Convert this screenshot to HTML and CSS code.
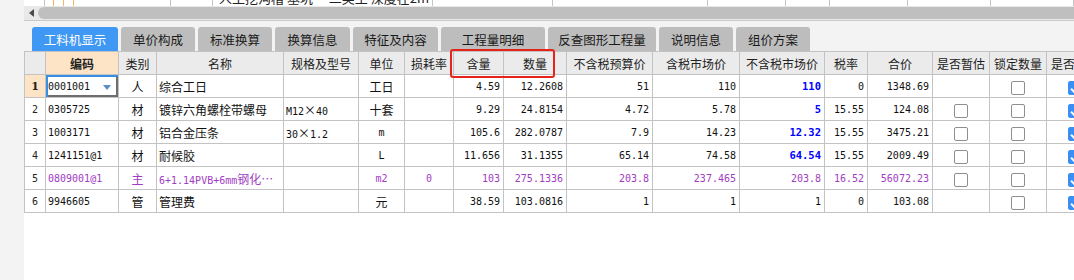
FILE: index.html
```html
<!DOCTYPE html>
<html lang="zh">
<head>
<meta charset="utf-8">
<title>工料机显示</title>
<link rel="stylesheet" href="styles.css">
</head>
<body>
<div class="app">
  <div class="side"></div>
  <div class="main">
    <div class="prev-row">
      <div class="pc w21"></div>
      <div class="pc w9 or"></div>
      <div class="pc w10 or"></div>
      <div class="pc w10 or"></div>
      <div class="pc w97"></div>
      <div class="pc w42"></div>
      <div class="pc w220 txt">人工挖沟槽 基坑　 二类土 深度在2m</div>
      <div class="pc w120"></div>
      <div class="pc w155"></div>
      <div class="pc w78"></div>
      <div class="pc w44"></div>
      <div class="pc w78"></div>
      <div class="pc w83"></div>
      <div class="pc w83"></div>
    </div>
    <div class="hscroll"><span class="arrow"></span><span class="thumb"></span></div>
    <div class="tabs">
      <div class="tab active t86">工料机显示</div>
      <div class="tab t74">单价构成</div>
      <div class="tab t74">标准换算</div>
      <div class="tab t75">换算信息</div>
      <div class="tab t85">特征及内容</div>
      <div class="tab t104">工程量明细</div>
      <div class="tab t108">反查图形工程量</div>
      <div class="tab t74">说明信息</div>
      <div class="tab t74">组价方案</div>
    </div>
    <div class="grid-wrap">
      <table class="grid">
        <colgroup>
          <col class="k21"><col class="k73"><col class="k38"><col class="k127"><col class="k75"><col class="k46"><col class="k49"><col class="k50"><col class="k63"><col class="k86"><col class="k87"><col class="k85"><col class="k43"><col class="k65"><col class="k57"><col class="k57"><col class="k57">
        </colgroup>
        <thead>
          <tr>
            <th></th><th class="hl b">编码</th><th>类别</th><th>名称</th><th>规格及型号</th><th>单位</th><th>损耗率</th><th>含量</th><th>数量</th><th>不含税预算价</th><th>含税市场价</th><th>不含税市场价</th><th>税率</th><th>合价</th><th>是否暂估</th><th>锁定数量</th><th>是否计价</th>
          </tr>
        </thead>
        <tbody>
          <tr>
            <td class="idx hl bold">1</td>
            <td class="m l edit">0001001<span class="dd"></span></td>
            <td class="c">人</td>
            <td class="l">综合工日</td>
            <td></td>
            <td class="c">工日</td>
            <td></td>
            <td class="m r">4.59</td>
            <td class="m r">12.2608</td>
            <td class="m r">51</td>
            <td class="m r">110</td>
            <td class="m r blue">110</td>
            <td class="m r">0</td>
            <td class="m r">1348.69</td>
            <td></td>
            <td class="c"><span class="cb"></span></td>
            <td class="c"><span class="cb on"></span></td>
          </tr>
          <tr>
            <td class="idx">2</td>
            <td class="m l">0305725</td>
            <td class="c">材</td>
            <td class="l">镀锌六角螺栓带螺母</td>
            <td class="m l">M12<span class="cjk">×</span>40</td>
            <td class="c">十套</td>
            <td></td>
            <td class="m r">9.29</td>
            <td class="m r">24.8154</td>
            <td class="m r">4.72</td>
            <td class="m r">5.78</td>
            <td class="m r blue">5</td>
            <td class="m r">15.55</td>
            <td class="m r">124.08</td>
            <td class="c"><span class="cb"></span></td>
            <td class="c"><span class="cb"></span></td>
            <td class="c"><span class="cb on"></span></td>
          </tr>
          <tr>
            <td class="idx">3</td>
            <td class="m l">1003171</td>
            <td class="c">材</td>
            <td class="l">铝合金压条</td>
            <td class="m l">30<span class="cjk">×</span>1.2</td>
            <td class="m c">m</td>
            <td></td>
            <td class="m r">105.6</td>
            <td class="m r">282.0787</td>
            <td class="m r">7.9</td>
            <td class="m r">14.23</td>
            <td class="m r blue">12.32</td>
            <td class="m r">15.55</td>
            <td class="m r">3475.21</td>
            <td class="c"><span class="cb"></span></td>
            <td class="c"><span class="cb"></span></td>
            <td class="c"><span class="cb on"></span></td>
          </tr>
          <tr>
            <td class="idx">4</td>
            <td class="m l">1241151@1</td>
            <td class="c">材</td>
            <td class="l">耐候胶</td>
            <td></td>
            <td class="m c">L</td>
            <td></td>
            <td class="m r">11.656</td>
            <td class="m r">31.1355</td>
            <td class="m r">65.14</td>
            <td class="m r">74.58</td>
            <td class="m r blue">64.54</td>
            <td class="m r">15.55</td>
            <td class="m r">2009.49</td>
            <td class="c"><span class="cb"></span></td>
            <td class="c"><span class="cb"></span></td>
            <td class="c"><span class="cb on"></span></td>
          </tr>
          <tr class="main-mat">
            <td class="idx">5</td>
            <td class="m l">0809001@1</td>
            <td class="c">主</td>
            <td class="m l">6+1.14PVB+6mm<span class="cjk">钢化…</span></td>
            <td></td>
            <td class="m c">m2</td>
            <td class="m c">0</td>
            <td class="m r">103</td>
            <td class="m r">275.1336</td>
            <td class="m r">203.8</td>
            <td class="m r">237.465</td>
            <td class="m r">203.8</td>
            <td class="m r">16.52</td>
            <td class="m r">56072.23</td>
            <td class="c"><span class="cb"></span></td>
            <td class="c"><span class="cb"></span></td>
            <td class="c"><span class="cb on"></span></td>
          </tr>
          <tr>
            <td class="idx">6</td>
            <td class="m l">9946605</td>
            <td class="c">管</td>
            <td class="l">管理费</td>
            <td></td>
            <td class="c">元</td>
            <td></td>
            <td class="m r">38.59</td>
            <td class="m r">103.0816</td>
            <td class="m r">1</td>
            <td class="m r">1</td>
            <td class="m r">1</td>
            <td class="m r">0</td>
            <td class="m r">103.08</td>
            <td></td>
            <td class="c"><span class="cb"></span></td>
            <td class="c"><span class="cb on"></span></td>
          </tr>
        </tbody>
      </table>
      <div class="mark"></div>
    </div>
  </div>
</div>
</body>
</html>
```
FILE: styles.css
```css
* { box-sizing: border-box; }
body {
  margin: 0;
  background: #fff;
  font-family: "Noto Sans CJK SC", "Noto Sans", sans-serif;
  color: #1a1a1a;
}
.app {
  display: flex;
  width: 1074px;
  height: 280px;
  overflow: hidden;
}
.side {
  width: 24px;
  flex: none;
  background: #f3f3f3;
}
.main {
  flex: 1;
  min-width: 0;
  overflow: hidden;
  position: relative;
  background: #fff;
}

/* remnant of previous grid row */
.prev-row {
  display: flex;
  height: 6px;
  overflow: hidden;
  align-items: flex-end;
}
.pc {
  flex: none;
  height: 16px;
  border-right: 1px solid #c4c4c4;
}
.pc.or { border-right-color: #f5b562; }
.pc.txt {
  font-size: 13px;
  line-height: 16px;
  padding-left: 6px;
  white-space: nowrap;
  overflow: hidden;
  color: #222;
}
.w21 { width: 21px; } .w9 { width: 9px; } .w10 { width: 10px; }
.w97 { width: 97px; } .w42 { width: 42px; } .w220 { width: 220px; }
.w120 { width: 120px; } .w155 { width: 155px; } .w78 { width: 78px; }
.w44 { width: 44px; } .w83 { width: 83px; }

/* horizontal scroll bar */
.hscroll {
  height: 15px;
  background: #e8e8e8;
  border-bottom: 1px solid #c9c9c9;
  display: flex;
  align-items: center;
  padding-left: 5px;
}
.arrow {
  width: 0; height: 0;
  border-top: 4px solid transparent;
  border-bottom: 4px solid transparent;
  border-right: 5px solid #4a4a4a;
  margin-right: 4px;
}
.thumb {
  flex: 1;
  height: 12px;
  background: #bfbfbf;
  border-radius: 6px 0 0 6px;
}

/* tabs */
.tabs {
  height: 30px;
  background: #f3f3f3;
  display: flex;
  align-items: flex-end;
  gap: 3px;
  padding: 6px 0 0 8px;
}
.tab {
  height: 24px;
  flex: none;
  display: flex;
  align-items: center;
  justify-content: center;
  background: #bdbdbd;
  border-radius: 3px 3px 0 0;
  font-size: 12.5px;
  color: #1a1a1a;
  white-space: nowrap;
}
.tab.active { background: #3f98f4; color: #fff; }
.t74 { width: 74px; } .t75 { width: 75px; } .t85 { width: 85px; }
.t86 { width: 86px; } .t104 { width: 104px; } .t108 { width: 108px; }

/* grid */
.grid-wrap { position: relative; }
.grid {
  border-collapse: collapse;
  table-layout: fixed;
  width: 1079px;
}
.k21 { width: 21px; } .k73 { width: 73px; } .k38 { width: 38px; }
.k127 { width: 127px; } .k75 { width: 75px; } .k46 { width: 46px; }
.k49 { width: 49px; } .k50 { width: 50px; } .k63 { width: 63px; }
.k86 { width: 86px; } .k87 { width: 87px; } .k85 { width: 85px; }
.k43 { width: 43px; } .k65 { width: 65px; } .k57 { width: 57px; }

.grid tr { height: 23px; }
.grid th, .grid td {
  border: 1px solid #c3c3c3;
  padding: 0 3px;
  white-space: nowrap;
  overflow: hidden;
  vertical-align: middle;
}
.grid th {
  background: #ebebeb;
  font-weight: normal;
  font-size: 12px;
  color: #222;
  text-align: center;
}
.grid th.b { font-weight: bold; }
.grid .hl { background: #fde4c6; }
.grid td {
  font-size: 12px;
  color: #111;
}
.grid td.m {
  font-family: "DejaVu Sans Mono", "Noto Sans CJK SC", monospace;
  font-size: 10px;
}
.cjk {
  font-family: "Noto Sans CJK SC", sans-serif;
  font-size: 12px;
}
.grid td.l { text-align: left; padding-left: 2px; }
.grid td.c { text-align: center; }
.grid td.r { text-align: right; }
.grid td.idx {
  text-align: center;
  font-family: "DejaVu Sans Mono", monospace;
  font-size: 10px;
  color: #222;
}
.grid td.bold { font-family: "DejaVu Serif", serif; font-weight: bold; font-size: 11px; }
.grid td.blue { color: #0000ff; font-weight: bold; font-size: 10.5px; }
.grid tr.main-mat td { color: #a13cc4; }
.grid tr.main-mat td.idx { color: #222; }

.grid td.edit {
  position: relative;
  box-shadow: inset 2px 2px 0 #3b8fe2, inset -2px -2px 0 #6e6e6e;
}
.dd {
  position: absolute;
  right: 7px;
  top: 10px;
  width: 0; height: 0;
  border-left: 4px solid transparent;
  border-right: 4px solid transparent;
  border-top: 5px solid #5a8ec9;
}

.cb {
  display: inline-block;
  width: 14px;
  height: 14px;
  border: 1px solid #8e8e8e;
  border-radius: 2px;
  background: #fff;
  vertical-align: middle;
  position: relative;
}
.cb.on {
  background: #3b8ef3;
  border-color: #3b8ef3;
}
.cb.on::after {
  content: "";
  position: absolute;
  left: 4px;
  top: 1px;
  width: 4px;
  height: 8px;
  border-right: 2px solid #fff;
  border-bottom: 2px solid #fff;
  transform: rotate(45deg);
}

/* annotation box over header */
.mark {
  position: absolute;
  left: 426px;
  top: -2px;
  width: 105px;
  height: 29px;
  border: 2px solid #e8231b;
  border-radius: 3px;
}
```
